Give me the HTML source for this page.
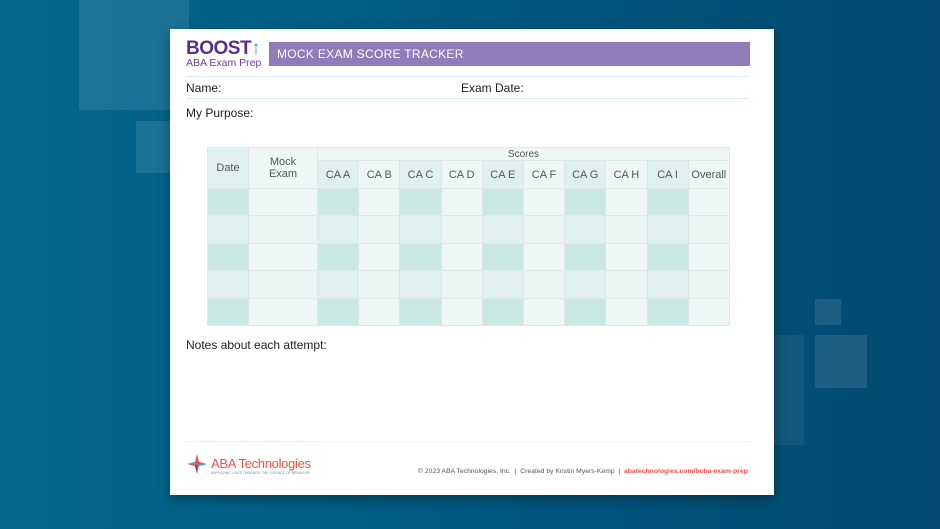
<!DOCTYPE html>
<html><head><style>
*{margin:0;padding:0;box-sizing:border-box}
body{width:940px;height:529px;overflow:hidden;position:relative;font-family:"Liberation Sans",sans-serif;background:linear-gradient(90deg,#03688f 0%,#02557c 60%,#024a70 100%)}
.sq{position:absolute;background:rgba(255,255,255,0.1)}
.paper{position:absolute;left:170px;top:29px;width:604px;height:466px;background:#fff;box-shadow:0 4px 12px rgba(0,0,0,0.35)}
.abs{position:absolute}
table{border-collapse:collapse;table-layout:fixed;position:absolute;left:37px;top:118px;width:522px;font-size:11px;color:#555;border:1px solid #d6d6d6}
td{border:1px solid #dde9e7;text-align:center;padding:0;overflow:hidden;white-space:nowrap}
.d{background:#c9e8e4}.l{background:#eef7f5}
.d2{background:#dff0ee}.l2{background:#ebf6f4}
</style></head><body>
<div class="sq" style="left:79px;top:0;width:110px;height:110px"></div>
<div class="sq" style="left:136px;top:121px;width:34px;height:52px"></div>
<div class="sq" style="left:815px;top:299px;width:26px;height:26px"></div>
<div class="sq" style="left:815px;top:335px;width:52px;height:53px"></div>
<div class="sq" style="left:774px;top:335px;width:30px;height:110px;background:rgba(255,255,255,0.06)"></div>
<div class="paper">
 <div class="abs" style="left:16px;top:9px;font-weight:900;font-size:19px;color:#5b2d91;letter-spacing:-0.5px">BOOST<span style="color:#2cb5a8">↑</span></div>
 <div class="abs" style="left:16px;top:28px;font-size:10.5px;color:#6a3ea1">ABA Exam Prep</div>
 <div class="abs" style="left:99px;top:13px;width:481px;height:24px;background:#8f7cb8;color:#fff;font-size:12px;line-height:24px;padding-left:8px;letter-spacing:0.3px">MOCK EXAM SCORE TRACKER</div>
 <div class="abs" style="left:16px;top:47px;width:564px;border-top:1px solid #dcefed"></div>
 <div class="abs" style="left:16px;top:52px;font-size:12px;color:#222">Name:</div>
 <div class="abs" style="left:291px;top:52px;font-size:12px;color:#222">Exam Date:</div>
 <div class="abs" style="left:16px;top:69px;width:564px;border-top:1px solid #dcefed"></div>
 <div class="abs" style="left:16px;top:77px;font-size:12px;color:#222">My Purpose:</div>
 <table>
  <colgroup><col style="width:41px"><col style="width:69px"><col span="10" style="width:41.2px"></colgroup>
  <tr style="height:13px"><td rowspan="2" class="d2">Date</td><td rowspan="2" class="l" style="line-height:12px">Mock<br>Exam</td><td colspan="10" class="l" style="font-size:10px">Scores</td></tr>
  <tr style="height:28px"><td class="d2">CA A</td><td class="l">CA B</td><td class="d2">CA C</td><td class="l">CA D</td><td class="d2">CA E</td><td class="l">CA F</td><td class="d2">CA G</td><td class="l">CA H</td><td class="d2">CA I</td><td class="l">Overall</td></tr>
  <tr style="height:27px"><td class="d"></td><td class="l"></td><td class="d"></td><td class="l"></td><td class="d"></td><td class="l"></td><td class="d"></td><td class="l"></td><td class="d"></td><td class="l"></td><td class="d"></td><td class="l"></td></tr>
  <tr style="height:28px"><td class="d2"></td><td class="l2"></td><td class="d2"></td><td class="l2"></td><td class="d2"></td><td class="l2"></td><td class="d2"></td><td class="l2"></td><td class="d2"></td><td class="l2"></td><td class="d2"></td><td class="l2"></td></tr>
  <tr style="height:27px"><td class="d"></td><td class="l"></td><td class="d"></td><td class="l"></td><td class="d"></td><td class="l"></td><td class="d"></td><td class="l"></td><td class="d"></td><td class="l"></td><td class="d"></td><td class="l"></td></tr>
  <tr style="height:28px"><td class="d2"></td><td class="l2"></td><td class="d2"></td><td class="l2"></td><td class="d2"></td><td class="l2"></td><td class="d2"></td><td class="l2"></td><td class="d2"></td><td class="l2"></td><td class="d2"></td><td class="l2"></td></tr>
  <tr style="height:27px"><td class="d"></td><td class="l"></td><td class="d"></td><td class="l"></td><td class="d"></td><td class="l"></td><td class="d"></td><td class="l"></td><td class="d"></td><td class="l"></td><td class="d"></td><td class="l"></td></tr>
 </table>
 <div class="abs" style="left:16px;top:309px;font-size:12px;color:#222">Notes about each attempt:</div>
 <div class="abs" style="left:16px;top:412px;width:564px;border-top:1px solid #e8f2f1"></div>
 <svg class="abs" style="left:16px;top:424px" width="22" height="22" viewBox="0 0 22 22"><path d="M11 1 L13 9 L21 11 L13 13 L11 21 L9 13 L1 11 L9 9Z" fill="#e8544b"/><path d="M11 11 L21 11 L13 13Z" fill="#2cb5a8"/><path d="M11 11 L11 21 L9 13Z" fill="#6a3ea1"/><path d="M11 11 L1 11 L9 9Z" fill="#2cb5a8"/></svg>
 <div class="abs" style="left:41px;top:427px;font-size:13px;color:#e8544b;letter-spacing:-0.3px">ABA Technologies</div>
 <div class="abs" style="left:41px;top:442px;font-size:3.5px;color:#888">IMPROVING LIVES THROUGH THE SCIENCE OF BEHAVIOR</div>
 <div class="abs" style="left:248px;top:439px;font-size:6.8px;color:#555;white-space:nowrap">© 2023 ABA Technologies, Inc. &nbsp;| &nbsp;Created by Kristin Myers-Kemp &nbsp;| &nbsp;<span style="color:#e8544b;font-weight:bold">abatechnologies.com/bcba-exam-prep</span></div>
</div>
</body></html>
